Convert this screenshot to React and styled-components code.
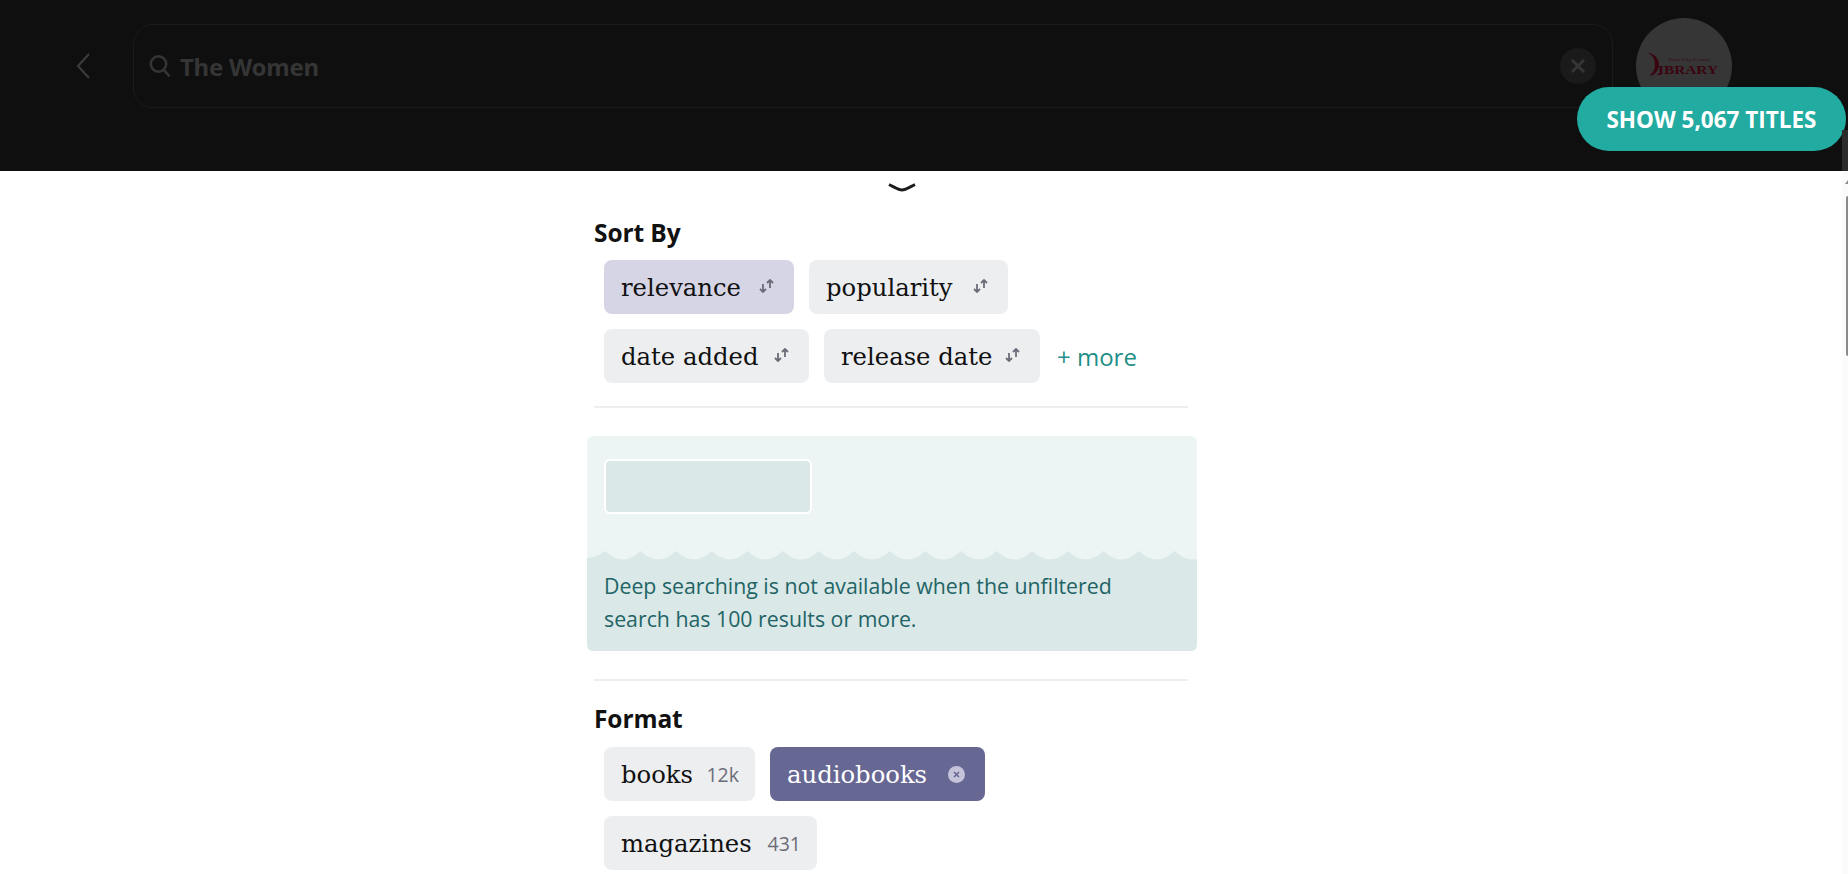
import React from "react";
import styled, { createGlobalStyle } from "styled-components";

const Global = createGlobalStyle`
  html, body { margin: 0; padding: 0; background: #fff; overflow: hidden; }
  body { font-family: "Open Sans", "Noto Sans", sans-serif; }
`;
const Page = styled.div`position: relative; width: 1848px; height: 874px; overflow: hidden; display: flex; flex-direction: column;`;
const Header = styled.header`height: 171px; flex: none; background: #0f0f0f; display: flex; align-items: flex-start; padding: 24px 116px 0 75px; box-sizing: border-box;`;
const BackButton = styled.div`width: 16px; height: 84px; display: flex; align-items: center; color: #3a3a3a; margin-right: 42px;`;
const SearchBox = styled.div`flex: 1; height: 84px; box-sizing: border-box; border: 1px solid #1a1a1a; border-radius: 20px; display: flex; align-items: center; padding: 0 16px 0 15px; color: #353535;`;
const SearchText = styled.span`font-family: "Noto Sans", sans-serif; font-weight: 700; font-size: 24px; margin-left: 9px; flex: 1; letter-spacing: -0.25px;`;
const ClearButton = styled.div`width: 36px; height: 36px; border-radius: 50%; background: #1a1a1a; color: #353535; display: flex; align-items: center; justify-content: center;`;
const Avatar = styled.div`width: 96px; height: 96px; margin: -6px 0 0 23px; border-radius: 50%; background: #363636; display: flex; align-items: center; justify-content: center; flex: none;`;
const ShowButton = styled.button`position: absolute; left: 1577px; top: 87px; width: 269px; height: 64px; border: 0; border-radius: 32px; background: #22aba0; color: #fff; font-family: "Open Sans", sans-serif; font-weight: 700; font-size: 22.5px; padding: 0;`;
const Rail = styled.div`position: absolute; right: 0; top: 130px; bottom: 0; width: 6px; background: linear-gradient(#2b2b2b 0 41px, #fbfbfb 41px);`;
const RailThumb = styled.div`position: absolute; right: 0; top: 66px; width: 2px; height: 160px; background: #8a8a8a; border-radius: 2px 0 0 2px;`;
const RailArrow = styled.div`position: absolute; right: 0; top: 50px; width: 0; height: 0; border-left: 3px solid transparent; border-bottom: 4px solid #8a8a8a;`;
const Sheet = styled.main`flex: 1; width: 610px; margin-left: 587px; min-height: 0;`;
const Grabber = styled.svg`width: 28px; height: 9px; margin: 12px 0 0 301px; color: #1c1c1c; display: block;`;
const Section = styled.section`padding: 0 9px 0 7px; margin-top: ${p => p.$top || "0"};`;
const SectionTitle = styled.h2`margin: 0; font-family: "Open Sans", sans-serif; font-weight: 700; font-size: 24.5px; letter-spacing: -0.1px; line-height: 30px; color: #111;`;
const ChipRow = styled.div`display: flex; flex-wrap: wrap; align-items: center; gap: 15px; padding-left: 10px; margin-top: ${p => p.$top || "15px"};`;
const Chip = styled.div`width: ${p => p.$w}px; height: 54px; box-sizing: border-box; padding: 0 20px 0 17px; border-radius: 8px; display: inline-flex; align-items: center; justify-content: space-between; background: ${p => p.$tone === "soft" ? "#d6d5e6" : p.$tone === "strong" ? "#676794" : "#edeef0"}; color: ${p => p.$tone === "strong" ? "#fff" : "#111"};`;
const ChipLabel = styled.span`font-family: "DejaVu Serif", serif; font-size: 24.3px;`;
const SortIcon = styled.svg`width: 15px; height: 14px; color: #6c6c78; margin-top: -3px; flex: none;`;
const Count = styled.span`font-size: 19.5px; color: #6c6c78; margin-right: -4px;`;
const Remove = styled.span`width: 17px; height: 17px; display: flex; color: #676794; flex: none;`;
const More = styled.span`font-size: 24px; color: #1f8f88; margin-left: 2px;`;
const Rule = styled.hr`border: 0; height: 2px; background: #eeeeef; margin: ${p => p.$m}; width: 594px;`;
const DeepPanel = styled.div`width: 610px; height: 215px; border-radius: 6px; overflow: hidden; background: #ecf5f4; display: flex; flex-direction: column;`;
const PanelTop = styled.div`height: 115px; padding: 23px 0 0 17px; box-sizing: border-box; flex: none;`;
const Placeholder = styled.div`width: 208px; height: 55px; box-sizing: border-box; border: 2px solid #fff; border-radius: 6px; background: #dae8e7;`;
const Wave = styled.svg`display: block; width: 610px; height: 9px; flex: none;`;
const PanelNote = styled.div`flex: 1; background: #dae8e7; padding: 9px 17px 0; color: #1f6466; font-size: 21.3px; line-height: 33px; margin: 0;`;

const SortGlyph = () => (
  <SortIcon viewBox="0 0 15 14" fill="none" stroke="currentColor" strokeWidth="1.8">
    <path d="M4 5v8M1 10l3 3 3-3" />
    <path d="M11 9V1M8 4l3-3 3 3" />
  </SortIcon>
);
const SortChip = ({ label, tone, w }) => (
  <Chip $tone={tone} $w={w}><ChipLabel>{label}</ChipLabel><SortGlyph /></Chip>
);
const CountChip = ({ label, count, w }) => (
  <Chip $w={w}><ChipLabel>{label}</ChipLabel><Count>{count}</Count></Chip>
);

const wavePeriod = 35.6;
const wavePath = () => {
  let d = "M0 9 L0 7 Q9 7 18 0";
  for (let x = 18; x < 620; x += wavePeriod) {
    d += ` Q${x + wavePeriod / 2} 17 ${x + wavePeriod} 0`;
  }
  return d + " L620 9 Z";
};

export default function App() {
  return (
    <Page>
      <Global />
      <Header>
        <BackButton>
          <svg width="16" height="28" viewBox="0 0 16 28" fill="none" stroke="currentColor" strokeWidth="2.2"><path d="M14 2 3 14l11 12" /></svg>
        </BackButton>
        <SearchBox>
          <svg width="22" height="24" viewBox="0 0 22 24" fill="none" stroke="currentColor" strokeWidth="2.6"><circle cx="9.5" cy="10" r="7.7" /><path d="m15 16 5.5 6.5" /></svg>
          <SearchText>The Women</SearchText>
          <ClearButton>
            <svg width="16" height="16" viewBox="0 0 16 16" fill="none" stroke="currentColor" strokeWidth="3"><path d="M2 2l12 12M14 2 2 14" /></svg>
          </ClearButton>
        </SearchBox>
        <Avatar>
          <svg width="72" height="26" viewBox="0 0 72 26" fill="#3a0510">
            <path d="M0 0c5 2 7 7 7 12 0 4-2 8-5 10l1 1c5-2 8-7 8-11 0-5-3-10-9-12zM9 21h4v1H9z" />
            <text x="20" y="8" fontFamily="Liberation Serif, serif" fontSize="5" textLength="42">Tulsa City-County</text>
            <text x="10" y="21" fontFamily="Liberation Serif, serif" fontSize="13" fontWeight="700" textLength="60" lengthAdjust="spacingAndGlyphs">IBRARY</text>
          </svg>
        </Avatar>
      </Header>
      <ShowButton>SHOW 5,067 TITLES</ShowButton>
      <Rail><RailArrow /><RailThumb /></Rail>
      <Sheet>
        <Grabber viewBox="0 0 28 9" fill="none" stroke="currentColor" strokeWidth="3"><path d="M1 1.5C8 5 11 7 14 7s6-2 13-5.5" /></Grabber>
        <Section $top="26px">
          <SectionTitle>Sort By</SectionTitle>
          <ChipRow $top="12px">
            <SortChip label="relevance" tone="soft" w={190} />
            <SortChip label="popularity" w={199} />
          </ChipRow>
          <ChipRow>
            <SortChip label="date added" w={205} />
            <SortChip label="release date" w={216} />
            <More>+ more</More>
          </ChipRow>
        </Section>
        <Rule $m="23px 0 28px 7px" />
        <DeepPanel>
          <PanelTop><Placeholder /></PanelTop>
          <Wave viewBox="0 0 610 9" preserveAspectRatio="none"><path d={wavePath()} fill="#dae8e7" /></Wave>
          <PanelNote>Deep searching is not available when the unfiltered<br />search has 100 results or more.</PanelNote>
        </DeepPanel>
        <Rule $m="28px 0 23px 7px" />
        <Section>
          <SectionTitle>Format</SectionTitle>
          <ChipRow $top="13px">
            <CountChip label="books" count="12k" w={151} />
            <Chip $tone="strong" $w={215}>
              <ChipLabel>audiobooks</ChipLabel>
              <Remove>
                <svg width="17" height="17" viewBox="0 0 17 17"><circle cx="8.5" cy="8.5" r="8.5" fill="#c4c3d9" /><path d="M6 6l5 5M11 6l-5 5" stroke="currentColor" strokeWidth="1.6" /></svg>
              </Remove>
            </Chip>
          </ChipRow>
          <ChipRow>
            <CountChip label="magazines" count="431" w={213} />
          </ChipRow>
        </Section>
      </Sheet>
    </Page>
  );
}
